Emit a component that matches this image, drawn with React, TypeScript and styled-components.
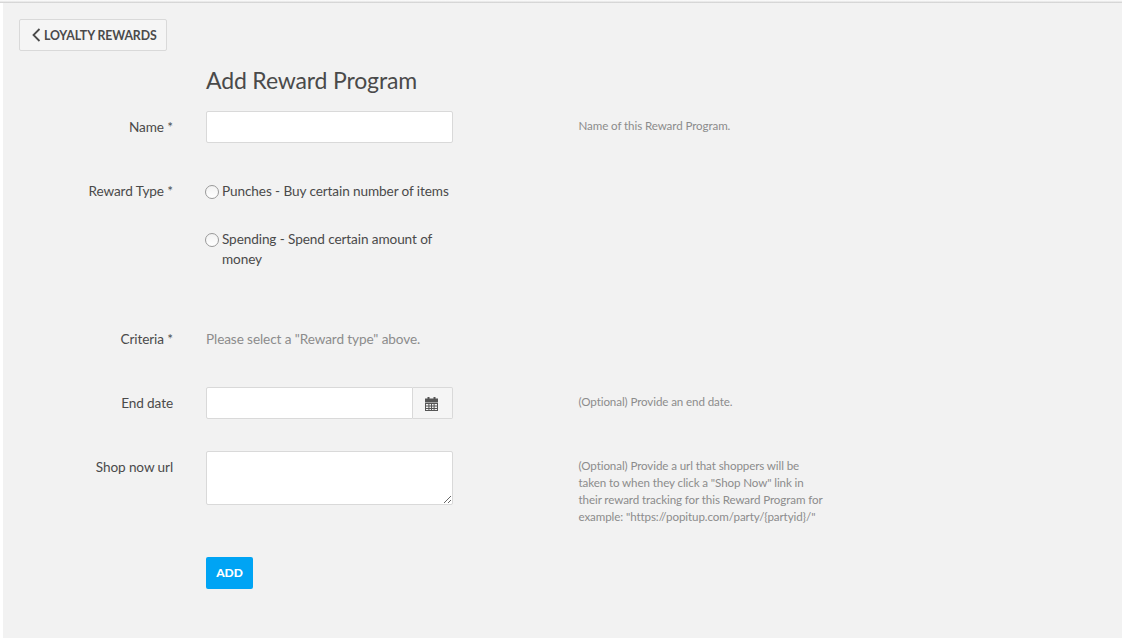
import React from "react";
import styled, { createGlobalStyle } from "styled-components";

const Global = createGlobalStyle`
  html, body { margin: 0; padding: 0; background: #fff; }
  body { font-family: "Lato", "Open Sans", sans-serif; color: #4a4a4a; }
  * { box-sizing: border-box; }
`;

const Page = styled.div`
  width: 1122px;
  height: 638px;
  padding: 3px 0 0 3px;
  overflow: hidden;
  background: linear-gradient(#ffffff, #e6e6e6 60%, #cbcbcb) no-repeat top / 100% 3px;
`;

const Panel = styled.main`
  height: 635px;
  background: #f2f2f2;
  padding: 16px;
`;

const BackButton = styled.button`
  display: flex;
  align-items: center;
  gap: 3px;
  height: 32px;
  width: 148px;
  padding: 2px 0 0 12px;
  background: #f5f5f5;
  border: 1px solid #d9d9d9;
  border-radius: 2px;
  font: 700 12.3px/1 "Lato", sans-serif;
  letter-spacing: -0.1px;
  color: #4a4a4a;
  white-space: nowrap;
`;

const BackChevron = styled.svg`
  margin-top: -3px;
`;

const Form = styled.form`
  display: grid;
  grid-template-columns: 187px 247px 1fr;
  row-gap: 32px;
`;

const Title = styled.h1`
  grid-column: 2 / 4;
  margin: 0 0 -32px;
  height: 60px;
  font: 400 23px/59px "Lato", sans-serif;
  letter-spacing: -0.15px;
  color: #4a4a4a;
`;

const Label = styled.label`
  grid-column: 1;
  padding: 6px 33px 0 0;
  text-align: right;
  font-size: 13.6px;
  letter-spacing: -0.1px;
  line-height: 20px;
  color: #4a4a4a;
`;

const Control = styled.div`
  grid-column: 2;
  min-width: 0;
`;

const Hint = styled.p`
  grid-column: 3;
  margin: 0 0 0 125.5px;
  padding-top: 6px;
  width: 248px;
  font-size: 11.6px;
  letter-spacing: -0.1px;
  line-height: 17px;
  color: #8c8c8c;
`;

const TextInput = styled.input`
  display: block;
  flex: 1;
  width: 100%;
  min-width: 0;
  height: 32px;
  padding: 0 8px;
  background: #fff;
  border: 1px solid #d9d9d9;
  border-radius: 2px;
`;

const Option = styled.label`
  display: grid;
  grid-template-columns: 16px 1fr;
  min-height: 32px;
  padding: 6px 0;
  margin-bottom: 16px;
  font-size: 13.6px;
  letter-spacing: -0.1px;
  line-height: 20px;
  color: #4a4a4a;
`;

const Radio = styled.input`
  appearance: none;
  width: 14px;
  height: 14px;
  margin: 4px 0 0 -1px;
  border: 1px solid #999;
  border-radius: 50%;
  background: linear-gradient(#f2f2f2, #ffffff);
`;

const Muted = styled.div`
  padding: 6px 0;
  font-size: 13.6px;
  letter-spacing: -0.1px;
  line-height: 20px;
  color: #8c8c8c;
`;

const InputGroup = styled.div`
  display: flex;
  height: 32px;
`;

const GroupedInput = styled(TextInput)`
  border-radius: 2px 0 0 2px;
`;

const Addon = styled.span`
  display: flex;
  align-items: center;
  justify-content: center;
  width: 40px;
  padding: 1px 2px 0 0;
  background: #f5f5f5;
  border: 1px solid #d9d9d9;
  border-left: 0;
  border-radius: 0 2px 2px 0;
  color: #555;
`;

const TextArea = styled.textarea`
  display: block;
  width: 247px;
  height: 54px;
  padding: 6px 8px;
  background: #fff;
  border: 1px solid #d9d9d9;
  border-radius: 2px;
`;

const SubmitRow = styled.div`
  grid-column: 2;
`;

const Submit = styled.button`
  width: 47px;
  height: 32px;
  padding: 0;
  background: #00a4f4;
  border: 0;
  border-radius: 2px;
  font: 900 12px/32px "Lato", sans-serif;
  letter-spacing: -0.1px;
  color: #fff;
`;

const ChevronLeft = () => (
  <BackChevron width="9" height="14" viewBox="0 0 9 14" fill="none" stroke="#4a4a4a" strokeWidth="1.8" aria-hidden="true">
    <path d="M7.5 1 1.5 7l6 6" />
  </BackChevron>
);

const CalendarIcon = () => (
  <svg width="13" height="14" viewBox="0 0 13 14" aria-hidden="true">
    <path fill="#555" d="M2.5 0h2v1.5h4V0h2v1.5H13V5H0V1.5h2.5z" />
    <path fill="#555" fillRule="evenodd" d="M0 5.5h13V14H0zM1 7v1.5h2.4V7zm3.4 0v1.5h1.6V7zm2.6 0v1.5h1.6V7zm2.6 0v1.5H12V7zM1 9.5V11h2.4V9.5zm3.4 0V11h1.6V9.5zm2.6 0V11h1.6V9.5zm2.6 0V11H12V9.5zM1 12v1h2.4v-1zm3.4 0v1h1.6v-1zm2.6 0v1h1.6v-1zm2.6 0v1H12v-1z" />
  </svg>
);

const SHOP_HINT =
  '(Optional) Provide a url that shoppers will be taken to when they click a "Shop Now" link in their reward tracking for this Reward Program for example: "https://popitup.com/party/{partyid}/"';

export default function App() {
  return (
    <>
      <Global />
      <Page>
        <Panel>
          <BackButton type="button">
            <ChevronLeft />
            LOYALTY REWARDS
          </BackButton>
          <Form>
            <Title>Add Reward Program</Title>

            <Label>Name *</Label>
            <Control>
              <TextInput type="text" />
            </Control>
            <Hint>Name of this Reward Program.</Hint>

            <Label>Reward Type *</Label>
            <Control>
              <Option>
                <Radio type="radio" name="type" />
                <span>Punches - Buy certain number of items</span>
              </Option>
              <Option>
                <Radio type="radio" name="type" />
                <span>Spending - Spend certain amount of money</span>
              </Option>
            </Control>

            <Label>Criteria *</Label>
            <Control>
              <Muted>Please select a "Reward type" above.</Muted>
            </Control>

            <Label>End date</Label>
            <Control>
              <InputGroup>
                <GroupedInput type="text" />
                <Addon>
                  <CalendarIcon />
                </Addon>
              </InputGroup>
            </Control>
            <Hint>(Optional) Provide an end date.</Hint>

            <Label>Shop now url</Label>
            <Control>
              <TextArea />
            </Control>
            <Hint>{SHOP_HINT}</Hint>

            <SubmitRow>
              <Submit type="button">ADD</Submit>
            </SubmitRow>
          </Form>
        </Panel>
      </Page>
    </>
  );
}
